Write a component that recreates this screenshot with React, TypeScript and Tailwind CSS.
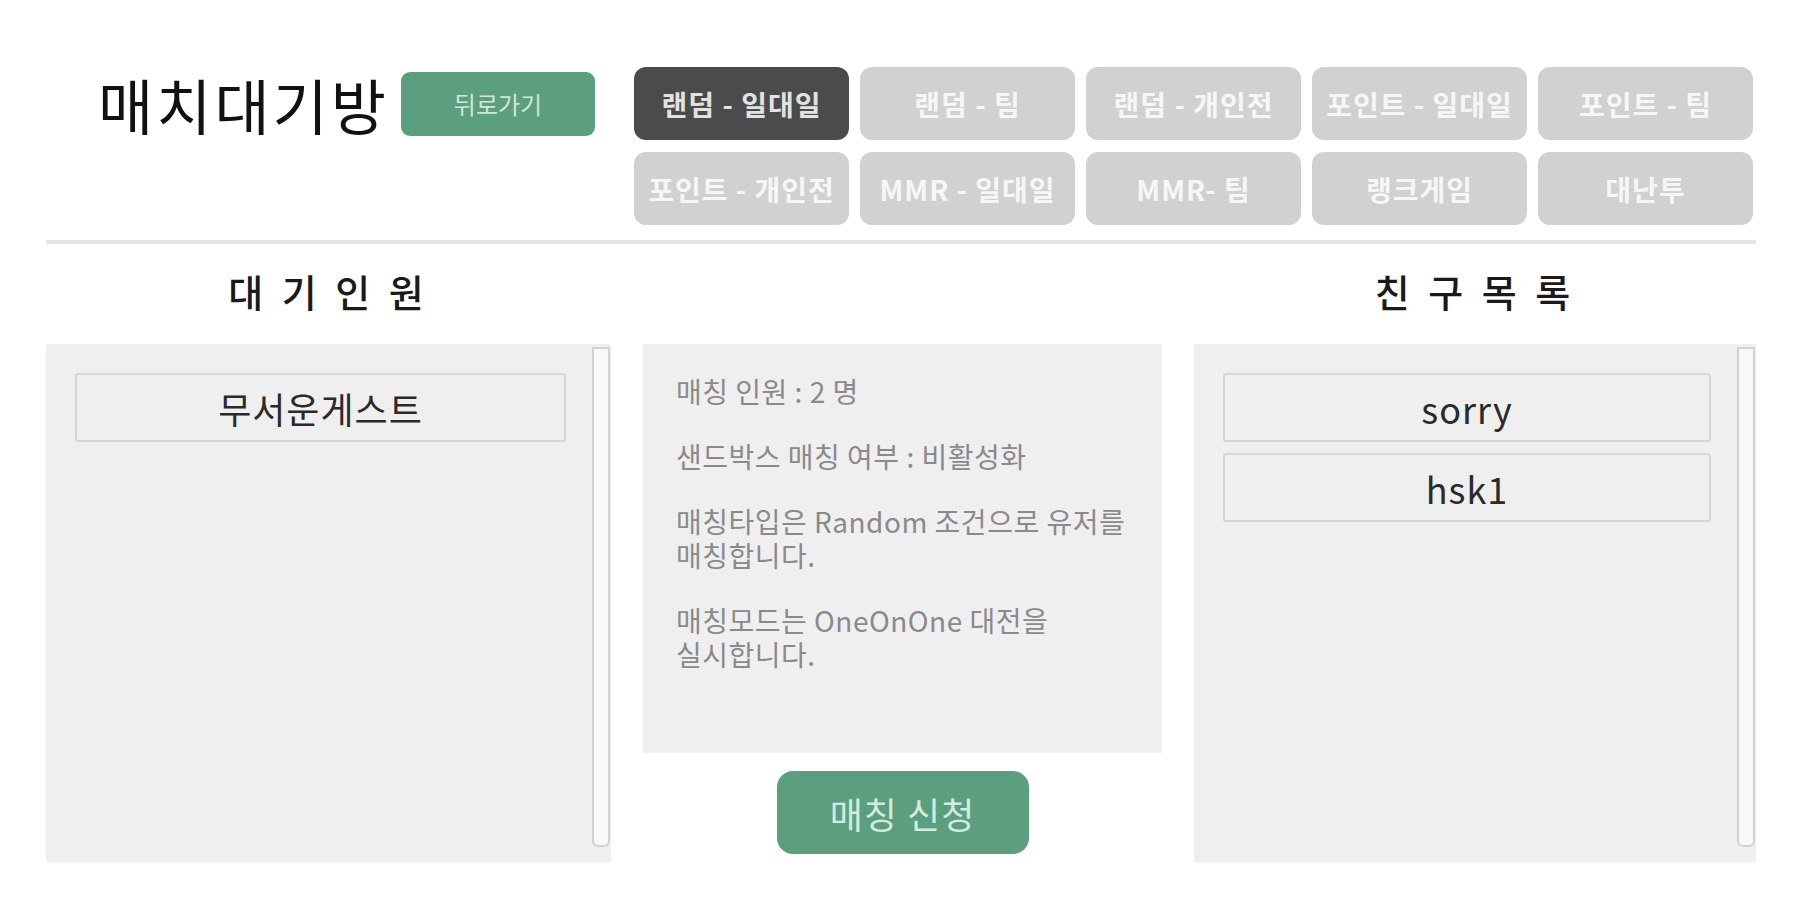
import { useState } from "react"

const modes = [
  "랜덤 - 일대일",
  "랜덤 - 팀",
  "랜덤 - 개인전",
  "포인트 - 일대일",
  "포인트 - 팀",
  "포인트 - 개인전",
  "MMR - 일대일",
  "MMR- 팀",
  "랭크게임",
  "대난투",
]

const waiting = ["무서운게스트"]
const friends = ["sorry", "hsk1"]

function Scrollbar() {
  return (
    <div className="w-[18px] mt-[3px] mb-[14px] mr-[1px] rounded-b-[6px] border-2 border-[#d2d2d2] bg-[#f8f8f8]" />
  )
}

function ListPanel({ items }: { items: string[] }) {
  return (
    <div className="flex h-[517px] bg-[#efefef] shadow-[0_2px_2px_rgba(0,0,0,0.06)] rounded-[2px]">
      <div className="flex-1 flex flex-col gap-[11px] pt-[29px] pl-[29px] pr-[26px]">
        {items.map((name) => (
          <div
            key={name}
            className="h-[69px] flex items-center justify-center border-2 border-[#d6d6d6] rounded-[3px] text-[36px] tracking-[1px] text-[#2a2a2a]"
          >
            {name}
          </div>
        ))}
      </div>
      <Scrollbar />
    </div>
  )
}

export default function App() {
  const [mode, setMode] = useState(0)

  return (
    <div className="min-h-[900px] bg-white pt-[67px] pl-[46px] pr-[44px] font-['Noto_Sans_CJK_KR',sans-serif]">
      {/* 상단 */}
      <div className="flex items-start">
        <div className="flex items-center shrink-0 h-[73px] pl-[52px] gap-[22px]">
          <h1 className="w-[281px] whitespace-nowrap text-[60px] leading-none tracking-[3px] text-[#111] font-normal">
            매치대기방
          </h1>
          <button className="w-[194px] h-[64px] rounded-[9px] bg-[#5b9f7f] text-[24px] text-[#cfe6d9]">
            뒤로가기
          </button>
        </div>
        <div className="ml-[39px] shrink-0 grid grid-cols-5 gap-x-[11px] gap-y-[12px]">
          {modes.map((m, i) => (
            <button
              key={m}
              onClick={() => setMode(i)}
              className={
                mode === i
                  ? "w-[215px] h-[73px] rounded-[12px] bg-[#4b4b4b] text-[28px] tracking-[1px] font-bold whitespace-nowrap text-[#e2e2e2]"
                  : "w-[215px] h-[73px] rounded-[12px] bg-[#d1d1d1] text-[28px] tracking-[1px] font-bold whitespace-nowrap text-[#f6f6f6]"
              }
            >
              {m}
            </button>
          ))}
        </div>
      </div>

      <div className="mt-[15px] h-[4px] bg-[#e6e6e6]" />

      {/* 본문 */}
      <div className="grid grid-cols-[565px_519px_562px] gap-x-[32px]">
        <div className="h-[100px] pb-[8px] flex items-center justify-center text-[38px] font-medium tracking-[5px] text-[#1a1a1a]">
          대 기 인 원
        </div>
        <div />
        <div className="h-[100px] pb-[8px] flex items-center justify-center text-[38px] font-medium tracking-[5px] text-[#1a1a1a]">
          친 구 목 록
        </div>

        <ListPanel items={waiting} />

        <div className="flex flex-col items-center">
          <div className="w-full h-[409px] bg-[#efefef] pt-[30px] pl-[33px] pr-[16px] text-[28px] tracking-[0.5px] leading-[34px] text-[#8a8a8a] flex flex-col gap-[31px]">
            <p>매칭 인원 : 2 명</p>
            <p>샌드박스 매칭 여부 : 비활성화</p>
            <p className="whitespace-nowrap">
              매칭타입은 Random 조건으로 유저를
              <br />
              매칭합니다.
            </p>
            <p className="whitespace-nowrap">
              매칭모드는 OneOnOne 대전을
              <br />
              실시합니다.
            </p>
          </div>
          <button className="mt-[18px] w-[252px] h-[83px] rounded-[16px] bg-[#5b9f7f] text-[36px] tracking-[1px] text-[#d5eadf]">
            매칭 신청
          </button>
        </div>

        <ListPanel items={friends} />
      </div>
    </div>
  )
}
